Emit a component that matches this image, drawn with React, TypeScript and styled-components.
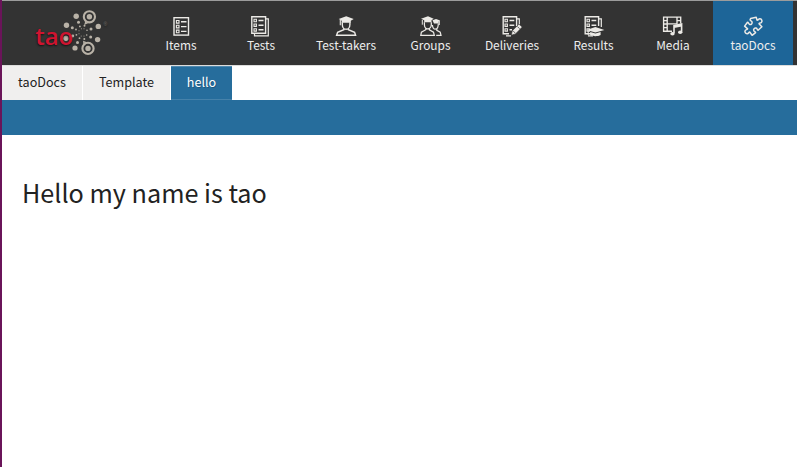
import React from "react";
import styled, { createGlobalStyle } from "styled-components";

const GlobalStyle = createGlobalStyle`
  * { box-sizing: border-box; }
  body {
    margin: 0;
    background: #fff;
    font-family: "Noto Sans CJK SC", "Noto Sans", sans-serif;
    color: #222;
  }
`;

const Page = styled.div`
  height: 467px;
  overflow: hidden;
  border-left: 2px solid #6a1459;
  background: #fff;
`;

const Header = styled.header`
  display: flex;
  height: 66px;
  border-top: 1px solid #9c9c9c;
  border-bottom: 1px solid #dddddc;
  background: #333;
`;

const LogoLink = styled.a`
  display: block;
  flex: none;
  width: 139px;
  padding: 4px 0 0 28px;
`;

const LogoArt = styled.svg`
  display: block;
  text-shadow: 0 1px 2px #111;
`;

const MainNav = styled.nav`
  display: flex;
`;

const NavItem = styled.a<{ $width: number; $active?: boolean }>`
  display: flex;
  flex-direction: column;
  align-items: center;
  width: ${(p) => p.$width}px;
  padding-top: 14px;
  background: ${(p) => (p.$active ? "#1d6598" : "transparent")};
  color: #eee;
`;

const IconSvg = styled.svg`
  display: block;
  width: 22px;
  height: 22px;
  fill: none;
  stroke: #eceae6;
  stroke-width: 1.4;
`;

const NavLabel = styled.span`
  font-size: 11.9px;
  line-height: 16px;
  white-space: nowrap;
`;

const Tabs = styled.nav`
  display: flex;
  gap: 1px;
  height: 34px;
`;

const Tab = styled.a<{ $width: number; $active?: boolean }>`
  width: ${(p) => p.$width}px;
  text-align: center;
  font-size: 12.6px;
  line-height: 32px;
  white-space: nowrap;
  background: ${(p) => (p.$active ? "#266d9c" : "#f0efee")};
  color: ${(p) => (p.$active ? "#fff" : "#222")};
  box-shadow: ${(p) => (p.$active ? "inset 0 1px #5089af, inset 0 -1px #4682aa" : "none")};
  text-shadow: ${(p) => (p.$active ? "1px 1px 0 rgba(0, 0, 0, 0.2)" : "none")};
`;

const ActionBar = styled.div`
  height: 35px;
  background: #266d9c;
`;

const Content = styled.main`
  padding: 37px 20px;
`;

const Title = styled.h1`
  margin: 0;
  font-size: 25.2px;
  font-weight: 400;
  line-height: 40px;
`;

const FILL = "#eceae6";

function Checklist() {
  return (
    <>
      <rect x="4" y="2.7" width="14.5" height="17.4" />
      <path d="M6.4 5.5h2.6v2.6H6.4zM6.4 10.3h2.6v2.6H6.4zM6.4 15.1h2.6v2.6H6.4z" strokeWidth="1.1" />
      <path d="M11 6.8h5.5M11 11.6h5.5M11 16.4h5.5" />
    </>
  );
}

function StackedList({ cut }: { cut?: boolean }) {
  return (
    <>
      <path d={cut ? "M8 18.7H2.2V1.7H15.6V11" : "M1.8 1.7H15.6V18.2H1.8z"} />
      <path d="M4 4.3h2.4v2.4H4zM4 9h2.4v2.4H4zM4 13.7h2.4v2.4H4z" strokeWidth="1.1" />
      <path d={cut ? "M8.5 5.5h4.8M8.5 10.2h4.8M8.5 14.8h2.5" : "M8.5 5.5h5M8.5 10.2h5M8.5 14.8h5"} />
      <path d={cut ? "M16 3.8h2.3V12M5 20.8h5" : "M16 3.8h2.3V20.8H4.5V19"} strokeWidth="1.2" />
    </>
  );
}

function Graduate() {
  return (
    <>
      <path d="M3.7 4.1 11.2 1.2 18.7 4.1 15.8 5.7V7.8H6.7V5.7z" fill={FILL} stroke="none" />
      <path d="M5.3 5v5.3" strokeWidth="1.1" />
      <path d="M7.3 7.3v2.1c0 2.7 1.7 4.9 3.8 4.9s3.8-2.2 3.8-4.9V7.3M8.8 13.6v1.1l-6.2 2.6-1 3h19l-1-3-6.2-2.6v-1.1" />
    </>
  );
}

function GraduateGroup() {
  return (
    <>
      <path d="M1 3.8 8 1.2l5.7 2.6-2.2 1.4v2.1H4.2V5.2zM12.5 5.2l3.5-1.1 4.2 1.5-1.5 1v1.8H14z" fill={FILL} stroke="none" />
      <path d="M2.3 5v4.7M19.3 6v4" strokeWidth="1" />
      <path d="M4.4 7.2v2.3c0 2.4 1.4 4.4 3.3 4.4 2.1 0 3.6-2 3.6-4.4V7.2M5.8 13.6v1.1l-4.4 2.5-.6 3.1h13.5l-.8-3.1-4.1-2.4v-1.2M12.4 10c.2 2.6 1.4 4.2 3 4.2 1.8 0 2.9-2.2 2.9-5.6M16.8 13.8v1.5l3.4 1.8.8 3.2h-4.8" strokeWidth="1.25" />
    </>
  );
}

function Pencil() {
  return (
    <>
      <path d="m10.3 20.2 1-4.4 6.7-6.7 3.2 3-6.7 6.8z" fill={FILL} stroke="#333" strokeWidth=".6" />
      <path d="m12 15.8 2.3 2.3M16.3 11.4l2.4 2.4" stroke="#333" strokeWidth=".7" />
    </>
  );
}

function Mortarboard() {
  return (
    <>
      <path d="m3.4 14.9 9-2.8 9 2.8-9 2.7z" fill={FILL} stroke="none" />
      <path d="M7.2 17.1v3c2.6 1.6 7.8 1.6 10.4 0v-3l-5.2 1.5z" fill={FILL} stroke="none" />
      <path d="M5.2 15.3v4.8" strokeWidth="1" />
    </>
  );
}

function FilmAndMusic() {
  return (
    <>
      <path d="M10 16.2H1.6V2.1h17.1v6.4M5.2 2v14M15 2v7M5.2 8.8H15M1.6 5.6h3.6M1.6 9h3.6M1.6 12.6h3.6M15 5.6h3.7" strokeWidth="1.35" />
      <path d="M12 18V10.6l7.6-1.7v7.8M12 12.3l7.6-1.7" strokeWidth="1.6" />
      <ellipse cx="10.5" cy="18.7" rx="2.2" ry="1.8" fill={FILL} stroke="none" />
      <ellipse cx="18.2" cy="17.3" rx="2.2" ry="1.8" fill={FILL} stroke="none" />
    </>
  );
}

function Puzzle() {
  return (
    <path
      d="M8.6 3.6 14.2 2.3 15.1 5.2c1.1.1 1.4-1.5 2.9-1.4 1.8.2 2.6 2.3 1.4 3.6-.9 1-2.1.4-2.4 1.3l2.9 3-3.8 3.5c-1.2-.2-.6-1.8-2-2.2-1.6-.4-3 1.2-2.3 2.7.5 1.1 1.8.8 1.8 1.9l-3.5 2.7-2.4-3.3c-1-.1-1 1.5-2.4 1.7-1.8.2-3-1.8-2-3.3.7-1.1 2.1-.5 2.3-1.5L2.6 11.1 5.5 7.3c1.2 0 .9 1.8 2.2 2.2 1.5.4 2.9-1.1 2.3-2.6-.4-1.1-1.7-1-1.9-2.1z"
      strokeWidth="1.5"
      strokeLinejoin="round"
    />
  );
}

function Logo() {
  const dots: [number, number, number][] = [
    [76.2, 16.2, 2.7], [66.5, 25.3, 2.7], [98.3, 26.4, 2.7], [97.6, 39.6, 2.7], [75, 48, 2.6],
    [66, 38.3, 2.7], [78.5, 22.3, 1.5], [72.3, 27.8, 1.5], [91, 29, 1.5], [90.7, 37, 1.5],
    [77.5, 42.5, 1.5], [72.8, 36, 1.4], [79.9, 26.4, 0.9], [76, 29.5, 0.9], [84.5, 25.8, 1],
    [87, 30.3, 0.8], [86.7, 35, 0.8], [84.3, 39, 1], [79.5, 38.2, 0.9], [76.4, 34.8, 0.9],
    [81.4, 28.8, 0.5], [84, 28.7, 0.5], [79, 30.8, 0.5], [79, 33.7, 0.5], [81.2, 36, 0.5], [84, 36, 0.5],
  ];
  return (
    <LogoArt width="82" height="56" viewBox="30 5 82 56">
      <g fill="none" stroke="#b9b2a7" strokeWidth="2.1">
        <circle cx="89.4" cy="16.8" r="5.6" />
        <circle cx="88" cy="48.4" r="5.6" />
        <path d="m86 21-.8 2.8 3-1.4M84 44l-.2-2.3 3 1.2" strokeWidth="1.3" />
      </g>
      <g fill="#b9b2a7">
        <circle cx="89.4" cy="16.8" r="2.7" />
        <circle cx="88" cy="48.4" r="2.7" />
        {dots.map(([x, y, r]) => <circle key={`${x}-${y}`} cx={x} cy={y} r={r} />)}
      </g>
      <text x="35.2" y="44.6" textLength="38" lengthAdjust="spacingAndGlyphs" fill="#cf1430" fontFamily="Open Sans" fontWeight="600" fontSize="23.5">tao</text>
      <text x="103.4" y="26" fill="#77716a" fontFamily="Liberation Sans" fontSize="5">®</text>
    </LogoArt>
  );
}

const NAV = [
  { label: "Items", width: 80, icon: <Checklist /> },
  { label: "Tests", width: 80, icon: <StackedList /> },
  { label: "Test-takers", width: 90, icon: <Graduate /> },
  { label: "Groups", width: 79, icon: <GraduateGroup /> },
  { label: "Deliveries", width: 84, icon: <><StackedList cut /><Pencil /></> },
  { label: "Results", width: 79, icon: <><StackedList cut /><Mortarboard /></> },
  { label: "Media", width: 80, icon: <FilmAndMusic /> },
  { label: "taoDocs", width: 80, icon: <Puzzle />, active: true },
];

export default function App() {
  return (
    <>
      <GlobalStyle />
      <Page>
        <Header>
          <LogoLink><Logo /></LogoLink>
          <MainNav>
            {NAV.map((item) => (
              <NavItem key={item.label} $width={item.width} $active={item.active}>
                <IconSvg viewBox="0 0 22 22">{item.icon}</IconSvg>
                <NavLabel>{item.label}</NavLabel>
              </NavItem>
            ))}
          </MainNav>
        </Header>
        <Tabs>
          <Tab $width={80}>taoDocs</Tab>
          <Tab $width={87}>Template</Tab>
          <Tab $width={61} $active>hello</Tab>
        </Tabs>
        <ActionBar />
        <Content>
          <Title>Hello my name is tao</Title>
        </Content>
      </Page>
    </>
  );
}
